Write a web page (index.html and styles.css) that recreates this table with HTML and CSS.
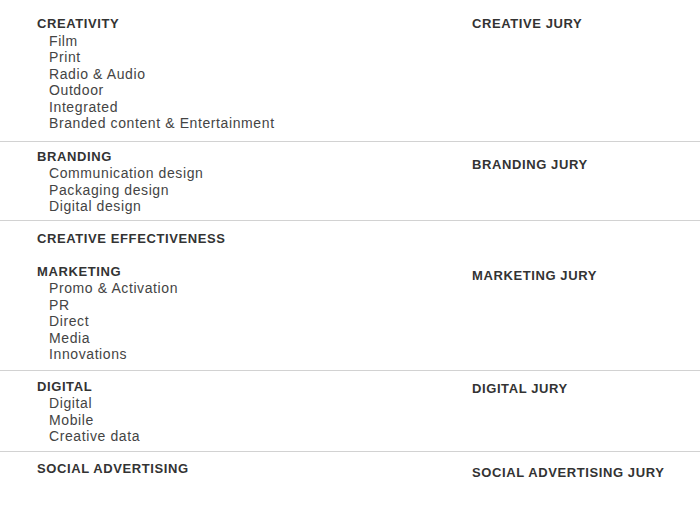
FILE: index.html
```html
<!DOCTYPE html>
<html>
<head>
<meta charset="utf-8">
<link rel="stylesheet" href="styles.css">
</head>
<body>
<div class="table">
  <div class="row row-1">
    <div class="cats">
      <div class="head">CREATIVITY</div>
      <ul class="items">
        <li>Film</li>
        <li>Print</li>
        <li>Radio &amp; Audio</li>
        <li>Outdoor</li>
        <li>Integrated</li>
        <li>Branded content &amp; Entertainment</li>
      </ul>
    </div>
    <div class="jury">CREATIVE JURY</div>
  </div>
  <div class="row row-2">
    <div class="cats">
      <div class="head">BRANDING</div>
      <ul class="items">
        <li>Communication design</li>
        <li>Packaging design</li>
        <li>Digital design</li>
      </ul>
    </div>
    <div class="jury jury-2">BRANDING JURY</div>
  </div>
  <div class="row row-3">
    <div class="cats">
      <div class="head head-gap">CREATIVE EFFECTIVENESS</div>
      <div class="head">MARKETING</div>
      <ul class="items">
        <li>Promo &amp; Activation</li>
        <li>PR</li>
        <li>Direct</li>
        <li>Media</li>
        <li>Innovations</li>
      </ul>
    </div>
    <div class="jury jury-3">MARKETING JURY</div>
  </div>
  <div class="row row-4">
    <div class="cats">
      <div class="head">DIGITAL</div>
      <ul class="items">
        <li>Digital</li>
        <li>Mobile</li>
        <li>Creative data</li>
      </ul>
    </div>
    <div class="jury jury-4">DIGITAL JURY</div>
  </div>
  <div class="row row-5">
    <div class="cats">
      <div class="head">SOCIAL ADVERTISING</div>
    </div>
    <div class="jury jury-5">SOCIAL ADVERTISING JURY</div>
  </div>
</div>
</body>
</html>
```
FILE: styles.css
```css
html, body {
  margin: 0;
  padding: 0;
  background: #fff;
}
body {
  font-family: "Liberation Sans", Arial, sans-serif;
  color: #444;
}
.table {
  padding-top: 8px;
}
.row {
  display: grid;
  grid-template-columns: 472px 1fr;
  border-top: 1px solid #d2d2d2;
}
.row-1 {
  border-top: none;
  padding-top: 8px;
  padding-bottom: 9px;
}
.row-2 { padding-top: 7px; padding-bottom: 5px; }
.row-3 { padding-top: 10px; padding-bottom: 7px; }
.row-4 { padding-top: 8px; padding-bottom: 6px; }
.row-5 { padding-top: 9px; padding-bottom: 8px; }
.cats {
  padding-left: 37px;
}
.head, .jury {
  font-size: 13px;
  font-weight: bold;
  line-height: 16.5px;
  color: #333;
  letter-spacing: 0.6px;
}
.head-gap {
  margin-bottom: 16.5px;
}
.items {
  list-style: none;
  margin: 0;
  padding: 0 0 0 12px;
  font-size: 14px;
  line-height: 16.5px;
  letter-spacing: 0.6px;
}
.jury-2 { margin-top: 8px; }
.jury-3 { margin-top: 37px; }
.jury-4 { margin-top: 2px; }
.jury-5 { margin-top: 4px; }
```
